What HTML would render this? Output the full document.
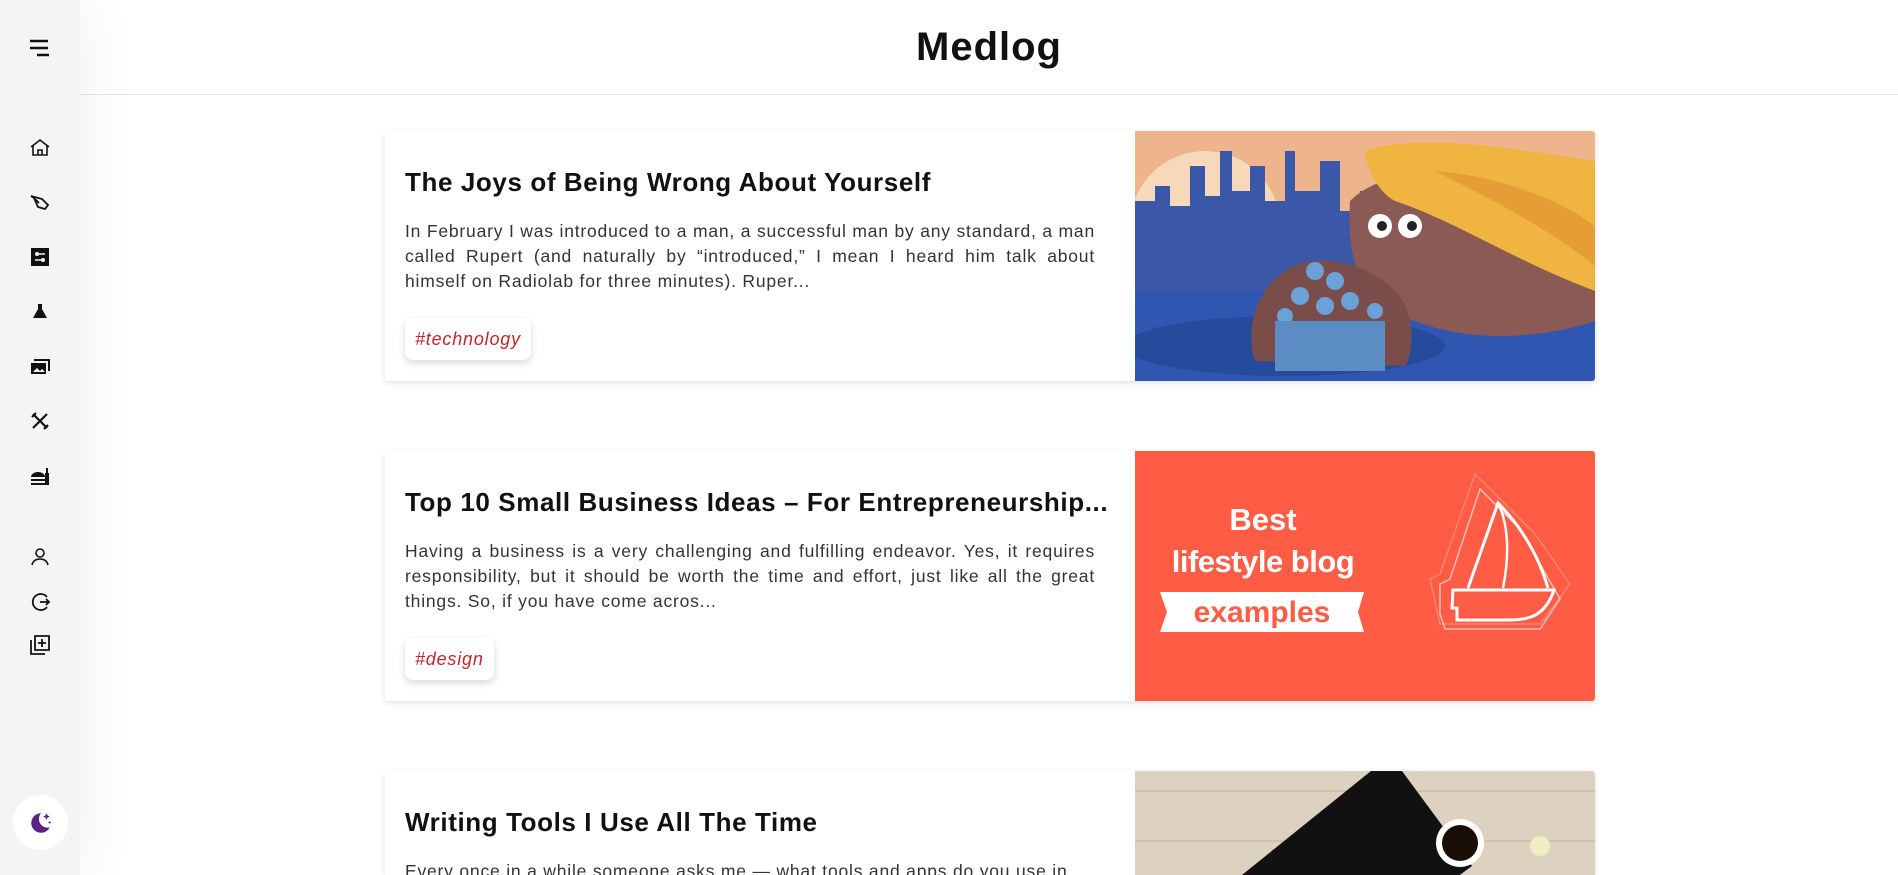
<!DOCTYPE html>
<html style="width:1898px;height:875px;overflow:hidden"><head><meta charset="utf-8"><style>
*{margin:0;padding:0;box-sizing:border-box}
body{width:1898px;height:875px;overflow:hidden;background:#fff;font-family:"Liberation Sans",sans-serif;position:relative}
.side{position:absolute;left:0;top:0;width:80px;height:875px;background:#f3f4f6;box-shadow:0 0 60px rgba(0,0,0,.07);z-index:2}
.side svg{position:absolute;left:28px;width:24px;height:24px}
.hdr{position:absolute;left:80px;top:0;right:0;height:95px;border-bottom:1px solid #e5e5e5;text-align:center}
.hdr h1{font-size:40px;font-weight:bold;line-height:95px;color:#111;letter-spacing:1px}
.card{position:absolute;left:385px;width:1210px;height:250px;background:#fff;box-shadow:0 2px 6px rgba(0,0,0,.12);border-radius:3px;overflow:hidden}
.card h2{position:absolute;left:20px;top:36px;font-size:26px;font-weight:bold;color:#111;white-space:nowrap;letter-spacing:.6px}
.card p{position:absolute;left:20px;top:88px;width:690px;font-size:17.5px;line-height:25px;color:#333;text-align:justify;letter-spacing:.8px}
.tag{position:absolute;left:20px;top:187px;height:42px;padding:0 10px;line-height:42px;border-radius:8px;box-shadow:0 3px 8px rgba(0,0,0,.16);color:#c0272d;font-style:italic;font-size:18px;background:#fff;letter-spacing:.8px}
.img{position:absolute;left:750px;top:0;width:460px;height:250px;overflow:hidden}
</style></head><body>
<div class="side">
<svg style="top:36px" viewBox="0 0 24 24" fill="none" stroke="#111" stroke-width="2.4"><path d="M2 5h18M2 12h18M9 19h12"/></svg>
<svg style="top:136px" viewBox="0 0 24 24" fill="none" stroke="#111" stroke-width="1.6"><path d="M3 11L12 4l9 7M5 10v9h14v-9M10 19v-5h4v5"/></svg>
<svg style="top:190px" viewBox="0 0 24 24" fill="none" stroke="#111" stroke-width="1.8"><path d="M3 6l11 3 6 6-3 4-7-2-4-9zM7 9l4 4"/></svg>
<svg style="top:245px" viewBox="0 0 24 24" fill="#111"><path d="M3 3h18v18H3z"/><circle cx="9" cy="9" r="2" fill="#f3f4f6"/><circle cx="15" cy="15" r="2" fill="#f3f4f6"/><path d="M9 9h8M7 15h8" stroke="#f3f4f6" stroke-width="1.5"/></svg>
<svg style="top:299px" viewBox="0 0 24 24" fill="#111"><path d="M10 5h4v5l5 9H5l5-9z"/></svg>
<svg style="top:354px" viewBox="0 0 24 24" fill="#111"><path d="M3 9h15v11H3z"/><path d="M6 6h15v11" fill="none" stroke="#111" stroke-width="2"/><path d="M5 18l4-4 3 3 2-2 3 3z" fill="#f3f4f6"/></svg>
<svg style="top:409px" viewBox="0 0 24 24" fill="none" stroke="#111" stroke-width="2.2"><path d="M5 5l14 14M19 5L5 19M8 4l-4 4M20 16l-4 4"/></svg>
<svg style="top:465px" viewBox="0 0 24 24" fill="#111"><path d="M3 12a7 5 0 0 1 14 0zM3 14h14v2H3zM3 18h14v2H3zM17 8h4v12h-4zM18 3h2v5h-2z"/></svg>
<svg style="top:545px" viewBox="0 0 24 24" fill="none" stroke="#111" stroke-width="1.6"><circle cx="12" cy="8" r="4"/><path d="M4 20c1-4 4-6 8-6s7 2 8 6"/></svg>
<svg style="top:590px" viewBox="0 0 24 24" fill="none" stroke="#111" stroke-width="1.8"><path d="M19 7A8 8 0 1 0 19 17M12 12h9M18 9l3 3-3 3"/></svg>
<svg style="top:633px" viewBox="0 0 24 24" fill="none" stroke="#111" stroke-width="1.8"><path d="M7 3h14v14H7zM3 7v14h14M14 6v8M10 10h8"/></svg>
<div style="position:absolute;left:13px;top:795px;width:55px;height:55px;border-radius:50%;background:#fff"></div>
<svg style="top:810px;left:27px;width:26px;height:26px" viewBox="0 0 24 24" fill="#5b2287"><path d="M13 3a9 9 0 1 0 8 13A8 8 0 0 1 13 3z"/><path d="M18 3l1 2 2 1-2 1-1 2-1-2-2-1 2-1zM21 10l.5 1 1 .5-1 .5-.5 1-.5-1-1-.5 1-.5z"/></svg>
</div>
<div class="hdr"><h1>Medlog</h1></div>

<div class="card" style="top:131px">
<h2>The Joys of Being Wrong About Yourself</h2>
<p>In February I was introduced to a man, a successful man by any standard, a man called Rupert (and naturally by “introduced,” I mean I heard him talk about himself on Radiolab for three minutes). Ruper...</p>
<div class="tag">#technology</div>
<div class="img"><svg width="460" height="250" viewBox="0 0 460 250">
<rect width="460" height="250" fill="#eeb58c"/>
<circle cx="70" cy="95" r="75" fill="#f6d8bb"/>
<path d="M0 70h20v-15h15v20h20v-40h15v30h15v-45h12v40h18v-25h15v35h20v-50h10v40h25v-30h20v50h20v-20H300v300H0z" fill="#3a57a8"/>
<rect x="0" y="160" width="460" height="90" fill="#2f56b0"/>
<ellipse cx="150" cy="215" rx="160" ry="30" fill="#264a9c"/>
<path d="M215 70c40-40 120-30 245-10v130c-60 20-130 20-180 0-40-10-70-40-65-120z" fill="#8b5a55"/>
<path d="M230 20c60-20 160 0 230 10v130c-80-30-140-70-200-90-20-10-30-40-30-50z" fill="#f0b441"/>
<path d="M300 40c60 5 120 25 160 55v40c-50-40-110-70-160-95z" fill="#e08e2f" opacity=".6"/>
<path d="M120 230c-10-30 0-70 30-90 30-20 80-10 110 20 20 20 20 60 10 75z" fill="#7a4c4a"/>
<g fill="#6aa1d6"><circle cx="180" cy="140" r="9"/><circle cx="200" cy="150" r="9"/><circle cx="165" cy="165" r="9"/><circle cx="215" cy="170" r="9"/><circle cx="190" cy="175" r="9"/><circle cx="240" cy="180" r="8"/><circle cx="150" cy="185" r="8"/></g>
<g fill="#5b8cc4"><rect x="140" y="190" width="110" height="50"/></g>
<circle cx="245" cy="95" r="12" fill="#fff"/><circle cx="275" cy="95" r="12" fill="#fff"/><circle cx="247" cy="95" r="5" fill="#222"/><circle cx="277" cy="95" r="5" fill="#222"/>
</svg></div>
</div>

<div class="card" style="top:451px">
<h2>Top 10 Small Business Ideas – For Entrepreneurship...</h2>
<p>Having a business is a very challenging and fulfilling endeavor. Yes, it requires responsibility, but it should be worth the time and effort, just like all the great things. So, if you have come acros...</p>
<div class="tag">#design</div>
<div class="img"><svg width="460" height="250" viewBox="0 0 460 250">
<rect width="460" height="250" fill="#fe5c45"/>
<text x="128" y="79" font-family="Liberation Sans" font-weight="bold" font-size="31" fill="#fff" text-anchor="middle">Best</text>
<text x="128" y="121" font-family="Liberation Sans" font-weight="bold" font-size="31" fill="#fff" text-anchor="middle" letter-spacing="-0.5">lifestyle blog</text>
<path d="M25 141h204l-6 20 6 20H25l7-20z" fill="#fff"/>
<text x="127" y="171" font-family="Liberation Sans" font-weight="bold" font-size="30" fill="#fe5c45" text-anchor="middle">examples</text>
<g fill="none" stroke="#fff" transform="translate(-20,18)"><path d="M338 121h101c-10 30-30 30-50 30h-47v-12h-5z" stroke-width="3"/><path d="M353 119l30-85c20 20 40 50 50 85" stroke-width="3"/><path d="M383 34c10 20 12 50 5 85" stroke-width="2.5"/><path d="M325 115l10-5 30-90 40 40 40 70-20 30h-95l-5-15z" opacity=".6" stroke-width="1.5"/><path d="M315 110l10-5 35-100 60 60 35 50-30 40h-100z" opacity=".35"/></g>
</svg></div>
</div>

<div class="card" style="top:771px;height:104px;border-radius:3px 3px 0 0">
<h2>Writing Tools I Use All The Time</h2>
<p>Every once in a while someone asks me — what tools and apps do you use in</p>
<div class="img"><svg width="460" height="250" viewBox="0 0 460 250">
<rect width="460" height="250" fill="#ddd2bf"/>
<g stroke="#c8bba5" stroke-width="2" opacity=".7"><path d="M0 20h460M0 70h460M0 130h460"/></g>
<path d="M66 137l170-137h31l70 95-210 155h-50z" fill="#111"/>
<path d="M190 250l130-110 18 20-60 90z" fill="#c9c9c9"/>
<path d="M210 250l90-80 25 30-30 50z" fill="#333"/>
<circle cx="325" cy="72" r="24" fill="#fff"/><circle cx="325" cy="72" r="18" fill="#1a0e08"/>
<circle cx="405" cy="75" r="10" fill="#eeeec5"/>
</svg></div>
</div>
</body></html>
